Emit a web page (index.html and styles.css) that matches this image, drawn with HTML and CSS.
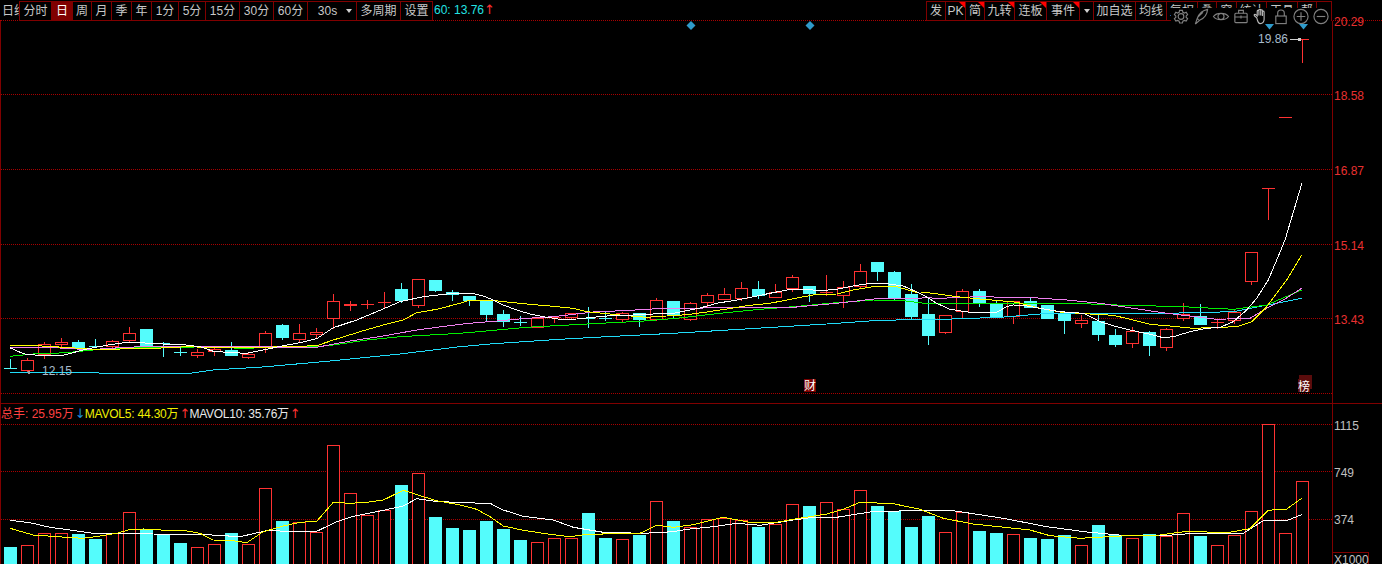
FILE: index.html
```html
<!DOCTYPE html>
<html lang="zh-CN">
<head>
<meta charset="utf-8">
<title>K线图</title>
<link rel="stylesheet" href="styles.css">
</head>
<body>
<div class="app">
  <header class="toolbar">
    <div class="btn-group periods">
      <span class="btn clip">日线</span>
      <span class="btn">分时</span>
      <span class="btn active">日</span>
      <span class="btn">周</span>
      <span class="btn">月</span>
      <span class="btn">季</span>
      <span class="btn">年</span>
      <span class="btn">1分</span>
      <span class="btn">5分</span>
      <span class="btn">15分</span>
      <span class="btn">30分</span>
      <span class="btn">60分</span>
      <span class="btn with-caret">30s<i class="caret"></i></span>
      <span class="btn">多周期</span>
      <span class="btn last">设置</span>
    </div>
    <div class="ma-readout">60: 13.76<b class="up">↑</b></div>
    <div class="btn-group tools">
      <span class="btn">发</span>
      <span class="btn flag">PK</span>
      <span class="btn flag">简</span>
      <span class="btn flag">九转</span>
      <span class="btn flag">连板</span>
      <span class="btn flag">事件</span>
      <span class="btn"><i class="caret"></i></span>
      <span class="btn">加自选</span>
      <span class="btn">均线</span>
      <span class="btn">复权</span>
      <span class="btn">叠</span>
      <span class="btn">窗</span>
      <span class="btn">统计</span>
      <span class="btn">工具</span>
      <span class="btn">帮</span>
      <span class="btn last"></span>
    </div>
    <div class="icon-strip">
      <svg class="icon" viewBox="0 0 18 18"><path d="M7.500 2.500h3l.5 2 1.600.8 1.900-.8 1.500 2.600-1.500 1.300v1.600l1.500 1.300-1.500 2.600-1.900-.8-1.600.8-.5 2h-3l-.5-2-1.600-.8-1.900.8-1.500-2.600 1.500-1.300V8.400L2 7.100l1.500-2.600 1.900.8 1.600-.8z"/><circle cx="9" cy="9" r="3"/></svg>
      <svg class="icon" viewBox="0 0 18 18"><path d="M3 17 5 11C7 6 11 2.500 16 1.500 15.500 6.500 12.500 11 7.500 13L3 17M5 11l1.500 1.500M6 9.500l5-5"/></svg>
      <svg class="icon" viewBox="0 0 18 18"><path d="M1 9C4 4.500 14 4.500 17 9 14 13.500 4 13.500 1 9z"/><circle cx="9" cy="9" r="3.200"/></svg>
      <svg class="icon" viewBox="0 0 18 18"><rect x="2.500" y="5.500" width="13" height="10" rx="1"/><path d="M6.500 5.500v-3h5v3M2.500 9.500h13M9 8v3"/></svg>
      <svg class="icon hand" viewBox="0 0 18 18"><path d="M4.500 10.500 2 8.200c-.8-1 .5-2 1.400-1.200L5 8.500V3.500c0-1.300 1.800-1.300 1.800 0V8V2.300c0-1.300 1.900-1.300 1.900 0V8V2.800c0-1.300 1.800-1.300 1.800 0V8.500V4.300c0-1.300 1.800-1.300 1.800 0V12c0 2.800-2 4.500-4.300 4.500S6 15 4.500 10.500z"/></svg>
      <svg class="icon" viewBox="0 0 18 18"><rect x="3.500" y="8.500" width="11" height="8"/><path d="M5.500 8.500V5.500c0-4.500 7-4.500 7 0v3"/></svg>
      <svg class="icon" viewBox="0 0 18 18"><circle cx="9" cy="9" r="7.500"/><path d="M4.500 9h9M9 4.500v9"/></svg>
      <svg class="icon" viewBox="0 0 18 18"><circle cx="9" cy="9" r="7.500"/><path d="M4.500 9h9"/></svg>
    </div>
  </header>
  <section class="pane pane-price">
    <svg id="price" class="plot" width="1382" height="383" viewBox="0 21 1382 383"></svg>
  </section>
  <section class="pane pane-volume">
    <div class="legend">
      <span class="lg-red">总手: 25.95万</span><b class="down">↓</b>
      <span class="lg-yellow">MAVOL5: 44.30万</span><b class="up">↑</b>
      <span class="lg-white">MAVOL10: 35.76万</span><b class="up">↑</b>
    </div>
    <svg id="volume" class="plot" width="1382" height="160" viewBox="0 404 1382 160"></svg>
  </section>
</div>
<script src="chart.js"></script>
</body>
</html>
```
FILE: styles.css
```css
* { box-sizing: border-box; }
html, body { margin: 0; padding: 0; background: #000; }
body { width: 1382px; height: 564px; overflow: hidden; font: 12px "Liberation Sans", "Noto Sans CJK SC", sans-serif; color: #c8c8c8; }
.app { display: flex; flex-direction: column; width: 1382px; height: 564px; position: relative; }

.toolbar { display: flex; flex: none; height: 21px; border-bottom: 1px dotted #a80000; position: relative; }
.btn-group { display: grid; height: 20px; margin-top: 1px; }
.periods { grid-template-columns: 19px 32px 21px 19px 20px 20px 20px 27px 27px 34px 34px 34px 49px 44px 33px; }
.tools { margin-left: auto; margin-right: 50px; grid-template-columns: 19px 20px 19px 30px 32px 33px 14px 42px 31px 31px 19px 20px 30px 31px 19px 16px; }
.btn { display: flex; align-items: center; justify-content: center; position: relative; overflow: hidden; white-space: nowrap; border: 1px solid #800000; border-right: 0; color: #c8c8c8; line-height: 1; }
.btn.last { border-right: 1px solid #800000; }
.btn.clip { border: 0; justify-content: flex-start; padding-left: 2px; }
.btn.active { background: #800000; color: #fff; }
.with-caret { gap: 9px; padding-left: 6px; }
.caret { display: block; width: 0; height: 0; border: 3px solid transparent; border-top: 4px solid #d0d0d0; border-bottom: 0; }
.flag::after { content: ""; position: absolute; top: 0; right: 0; border-top: 6px solid #f00; border-left: 6px solid transparent; }
.ma-readout { margin: 1px 0 0 1px; line-height: 19px; color: #22e4e4; }
.up, .down { display: inline-block; width: 7px; text-align: center; font: 400 13px/14px "DejaVu Sans", sans-serif; }
.up { color: #ff3232; }
.down { color: #1e90d8; }

.icon-strip { position: absolute; left: 1171px; top: 8px; width: 160px; height: 17px; background: #000; display: flex; align-items: center; }
.icon { width: 20px; height: 17px; fill: none; stroke: #808080; stroke-width: 1.200; }
.icon.hand { stroke: #b8b8b8; }

.pane { position: relative; flex: none; }
.pane-price { height: 383px; }
.pane-volume { height: 160px; }
.plot { display: block; overflow: visible; }
.legend { position: absolute; left: 1px; top: 3px; display: flex; line-height: 14px; white-space: nowrap; }
.lg-red { color: #ff4040; margin-right: 1px; }
.lg-yellow { color: #f0f000; margin-left: 3px; margin-right: 1px; letter-spacing: -.2px; }
.lg-white { color: #e8e8e8; margin-left: 3px; margin-right: 1px; letter-spacing: -.25px; }

.axis-price { fill: #e83030; font-size: 12px; }
.axis-vol { fill: #c0c0c0; font-size: 12px; }
.note { fill: #a8bccc; font-size: 12px; }
.marker { fill: #fff; font-size: 12px; }
```
FILE: chart.js
```javascript
// K-line data, read in screen coordinates: [kind, bodyTop, bodyBottom, wickTop, wickBottom].
// Each series block has an origin y; values are in 1/3 pixel units.
const RED = '#ff3232', CYAN = '#54fcfc', GRID = '#a80000', AXIS = '#800000';
const X0 = 4, STEP = 17, W = 13;

const candleBlocks = [
  [280, [
    ['c',263,263,237,263],['r',241,269,235,272],['r',193,222,186,234],['r',186,191,174,197],
    ['c',186,205,180,208],['c',199,199,178,201],['r',184,199,180,205],['r',160,179,141,184],
    ['c',147,194,147,194],['c',190,190,186,228],['c',217,217,205,224],['r',217,224,208,231],
    ['r',208,214,205,225],['c',211,224,186,224],['r',222,230,217,233],['r',160,202,153,215],
    ['c',135,171,132,177],['r',160,177,132,184],['r',156,163,144,172],['r',64,113,42,143],
    ['r',72,76,64,89],['r',71,71,60,83],['r',67,67,36,85],['c',27,60,9,66],
    ['r',-3,76,-3,81],['c',0,30,0,33],['c',37,42,30,60]
  ]],
  [250, [
    ['c',138,150,138,165],['c',150,192,150,210],['c',192,213,180,228],['c',217,217,198,225],
    ['r',205,230,205,232],['r',200,200,198,216],['r',190,200,190,208],['c',205,205,171,231],
    ['c',205,205,183,210],['r',190,207,186,213],['c',189,207,189,228],['r',151,207,144,210],
    ['c',153,195,153,204],['r',160,208,156,210],['r',136,155,129,168],['r',133,146,114,148],
    ['r',115,144,96,150],['c',117,135,93,144],['r',127,140,102,141],['r',82,113,75,123],
    ['c',108,129,108,153],['r',127,127,75,135],['r',112,134,93,171],['r',64,107,42,113],
    ['c',36,63,36,90],['c',66,141,63,147],['c',132,198,102,207]
  ]],
  [240, [
    ['c',222,285,177,312],['r',226,275,226,279],['r',154,213,148,235],['c',153,190,147,198],
    ['c',191,232,183,232],['r',183,228,183,249],['c',183,201,174,201],['c',195,234,195,234],
    ['c',222,240,222,279],['r',240,248,225,261],['c',243,282,225,300],['c',285,312,267,318],
    ['r',274,308,262,321],['c',276,315,273,345],['r',268,320,264,329],['r',222,234,189,240],
    ['c',228,252,192,252],['r',246,246,237,264],['r',216,240,210,249],['r',36,122,36,132],
    ['r',-156,-156,-156,-63],['r',-369,-369,-369,-369],['r',-603,-603,-603,-534]
  ]]
];

const volumes = [
  ['c',547],['r',545],['r',533],['r',533],['c',534],['c',539],['r',533],['r',512],['c',529],['c',534],
  ['c',543],['r',547],['r',544],['c',533],['r',544],['r',488],['c',521],['r',522],['r',532],['r',445],
  ['r',493],['r',515],['r',510],['c',485],['r',473],['c',517],['c',528],['c',530],['c',521],['c',529],
  ['c',540],['r',542],['r',538],['r',538],['c',513],['c',538],['r',539],['c',535],['r',501],['c',521],
  ['r',527],['r',519],['r',518],['r',520],['c',527],['r',524],['r',504],['c',506],['r',502],['r',509],
  ['r',490],['c',506],['c',511],['c',527],['c',516],['r',532],['r',512],['c',531],['c',533],['r',534],
  ['c',538],['c',539],['c',535],['r',545],['c',525],['c',535],['r',538],['c',534],['r',536],['r',513],
  ['c',536],['r',545],['r',535],['r',511],['r',424],['r',533],['r',481]
];

// Moving average traces: blocks of [originX, originY, [x,y,...]] in 1/3 pixel units.
const priceLines = [
  ['#20dcf8', [[0,280,[30,277,560,281,640,270,800,260,1000,242,1200,222,1380,200]],
    [460,250,[0,290,100,281,300,268,440,260,640,250,870,236,1100,222,1240,212,1380,208]],
    [900,240,[70,240,300,232,420,222,800,220,1000,215,1205,175]]]],
  ['#00f000', [[0,280,[30,229,100,222,200,218,280,210,360,204,500,203,620,200,720,205,950,200,1000,195,1100,180,1200,170,1380,160]],
    [460,250,[0,250,90,242,200,232,310,226,420,220,540,214,650,205,780,190,900,178,1000,170,1130,158,1240,150,1330,152,1380,158]],
    [900,240,[70,190,520,190,650,195,850,200,1000,208,1100,195,1205,150]]]],
  ['#f080f0', [[0,280,[30,203,150,203,210,205,260,210,330,205,420,200,560,198,700,200,950,202,1050,183,1150,168,1250,150,1380,133]],
    [460,250,[0,224,50,218,110,213,200,205,280,200,400,186,510,181,610,175,730,174,860,172,1000,172,1130,160,1250,146,1380,145]],
    [900,240,[70,173,120,175,230,170,400,173,500,180,600,190,700,205,800,220,870,228,950,238,1050,235,1100,205,1150,180,1205,145]]]],
  ['#ffff00', [[0,280,[30,197,110,197,160,200,210,203,270,207,360,207,465,205,560,200,620,202,700,204,780,202,860,200,950,197,1000,180,1080,155,1150,135,1210,120,1250,98,1310,88,1380,70]],
    [460,250,[0,157,30,150,90,150,140,156,200,162,270,168,340,175,380,185,430,190,500,197,560,202,620,198,680,194,740,186,800,177,860,167,930,160,1000,146,1060,135,1130,132,1180,120,1240,110,1310,110,1380,130]],
    [900,240,[70,157,100,160,170,170,240,177,300,182,350,187,420,205,480,216,570,222,640,226,700,240,750,253,820,259,880,265,960,262,1010,260,1055,245,1100,200,1160,120,1205,45]]]],
  ['#ffffff', [[0,280,[30,203,50,213,80,224,130,226,190,226,230,215,270,205,330,194,380,187,410,187,460,191,550,194,600,200,640,214,700,218,740,220,790,210,850,197,900,188,950,176,1000,143,1070,120,1130,95,1200,65,1270,50,1340,42,1380,40]],
    [460,250,[0,130,35,130,70,138,100,150,130,165,170,180,210,192,250,200,300,208,350,207,400,202,450,197,500,196,580,192,640,190,680,182,720,174,770,160,830,150,880,140,930,130,980,120,1040,118,1080,122,1130,118,1180,108,1230,100,1280,101,1330,108,1380,130]],
    [900,240,[70,165,110,190,150,208,210,217,290,217,320,200,340,195,370,196,420,205,480,215,550,220,600,245,650,260,700,272,750,283,790,293,820,290,870,275,920,265,960,262,1000,245,1040,210,1070,175,1105,120,1130,60,1155,0,1206,-171]]]]
];

const volumeLines = [
  ['#ffffff', [[0,400,[30,361,90,368,150,382,210,390,280,400,460,402,620,404,720,410,800,392,880,394,950,394,1010,365,1060,349,1130,335,1210,318,1250,296,1300,303,1380,308]],
    [460,400,[0,310,90,310,130,330,190,349,280,360,340,382,430,397,550,400,640,395,680,388,760,380,830,370,900,376,1000,360,1060,352,1130,352,1230,336,1380,331]],
    [920,400,[0,328,100,332,250,355,380,380,500,396,620,407,720,408,820,400,970,400,1030,362,1100,362,1145,344]]]],
  ['#ffff00', [[0,400,[30,385,100,405,200,412,250,415,300,408,350,400,385,390,430,387,500,391,550,391,600,400,640,420,700,422,740,428,790,395,850,378,900,367,950,364,1000,307,1050,310,1100,307,1150,300,1210,271,1270,290,1310,302,1380,315]],
    [460,400,[0,316,50,328,90,350,130,378,190,391,270,403,330,410,380,403,540,400,590,376,640,382,700,374,790,352,870,367,950,367,1000,358,1100,342,1150,328,1200,307,1300,311,1380,328]],
    [920,400,[0,328,70,355,160,372,330,390,390,407,480,415,620,407,720,405,800,394,920,398,990,386,1045,331,1100,327,1145,295]]]]
];

const NS = 'http://www.w3.org/2000/svg';
function el(parent, tag, attrs, text) {
  const node = document.createElementNS(NS, tag);
  for (const k in attrs) node.setAttribute(k, attrs[k]);
  if (text) node.textContent = text;
  parent.appendChild(node);
  return node;
}
const rect = (p, x, y, w, h, fill) => el(p, 'rect', { x, y, width: w, height: h, fill, 'shape-rendering': 'crispEdges' });
const dotted = (p, y, x2) => el(p, 'line', { x1: 1, x2: x2 || 1332, y1: y + .5, y2: y + .5, stroke: GRID, 'stroke-dasharray': '1 1', 'shape-rendering': 'crispEdges' });

function trace(p, color, blocks) {
  const pts = [];
  let last = -1;
  blocks.forEach(([ox, oy, a]) => {
    for (let i = 0; i < a.length; i += 2) {
      const x = ox + a[i] / 3;
      if (x > last) { pts.push(x.toFixed(1) + ',' + (oy + a[i + 1] / 3).toFixed(1)); last = x; }
    }
  });
  el(p, 'polyline', { points: pts.join(' '), fill: 'none', stroke: color, 'stroke-width': 1, 'shape-rendering': 'crispEdges' });
}

function bar(p, x, top, bottom, kind) {
  if (kind === 'c') { rect(p, x, top, W, bottom - top + 1, CYAN); return; }
  el(p, 'rect', { x: x + .5, y: top + .5, width: W - 1, height: Math.max(bottom - top, 0), fill: '#000', stroke: RED, 'shape-rendering': 'crispEdges' });
}

function drawPrice(svg) {
  [94, 169, 244, 318, 393].forEach(y => dotted(svg, y));
  rect(svg, 0, 21, 1, 383, AXIS);
  rect(svg, 1332, 21, 1, 383, AXIS);
  let i = 0;
  candleBlocks.forEach(([oy, list]) => list.forEach(([kind, bt, bb, wt, wb]) => {
    const x = X0 + STEP * i++;
    const c = kind === 'c' ? CYAN : RED;
    const y = z => Math.round(oy + z / 3);
    rect(svg, x + 6, y(wt), 1, y(wb) - y(wt) + 1, c);
    if (bb === bt) rect(svg, x, y(bt), W, 1, c); else bar(svg, x, y(bt), y(bb), kind);
  }));
  priceLines.forEach(([c, b]) => trace(svg, c, b));

  [['20.29', 21], ['18.58', 95], ['16.87', 170], ['15.14', 245], ['13.43', 319]].forEach(([t, y]) =>
    el(svg, 'text', { x: 1334, y: y + 5, class: 'axis-price' }, t));

  [691, 810].forEach(x => el(svg, 'polygon', { points: `${x - 4.500},25.500 ${x},21 ${x + 4.500},25.500 ${x},30`, fill: '#2f9bcb' }));
  [1269.500, 1303.500].forEach(x => el(svg, 'polygon', { points: `${x - 4.500},24 ${x + 4.500},24 ${x},29.500`, fill: '#2f9bcb' }));

  el(svg, 'text', { x: 1258, y: 43, class: 'note' }, '19.86');
  rect(svg, 1290, 39, 10, 1, '#d0d0d0');
  rect(svg, 1298, 38, 3, 3, '#d0d0d0');
  el(svg, 'text', { x: 42, y: 375, class: 'note' }, '12.15');
  rect(svg, 28, 371, 2, 3, '#a0a0a0');

  rect(svg, 804, 379, 12, 13, '#7a0000');
  el(svg, 'text', { x: 804, y: 390, class: 'marker' }, '财');
  rect(svg, 1299, 375, 13, 14, '#5a0c0c');
  rect(svg, 1298, 379, 12, 13, '#5a0c0c');
  el(svg, 'text', { x: 1298, y: 391, class: 'marker' }, '榜');
}

function drawVolume(svg) {
  rect(svg, 0, 403, 1382, 1, AXIS);
  rect(svg, 0, 404, 1, 160, AXIS);
  rect(svg, 1332, 404, 1, 160, AXIS);
  [424, 471, 519].forEach(y => dotted(svg, y));
  volumes.forEach(([kind, top], i) => bar(svg, X0 + STEP * i, top, 570, kind));
  volumeLines.forEach(([c, b]) => trace(svg, c, b));
  [['1115', 425], ['749', 472], ['374', 519]].forEach(([t, y]) =>
    el(svg, 'text', { x: 1334, y: y + 5, class: 'axis-vol' }, t));
  el(svg, 'rect', { x: 1332.5, y: 552.5, width: 36, height: 14, fill: '#000', stroke: AXIS, 'shape-rendering': 'crispEdges' });
  el(svg, 'text', { x: 1334, y: 564, class: 'axis-vol' }, 'X1000');
}

drawPrice(document.getElementById('price'));
drawVolume(document.getElementById('volume'));
```
